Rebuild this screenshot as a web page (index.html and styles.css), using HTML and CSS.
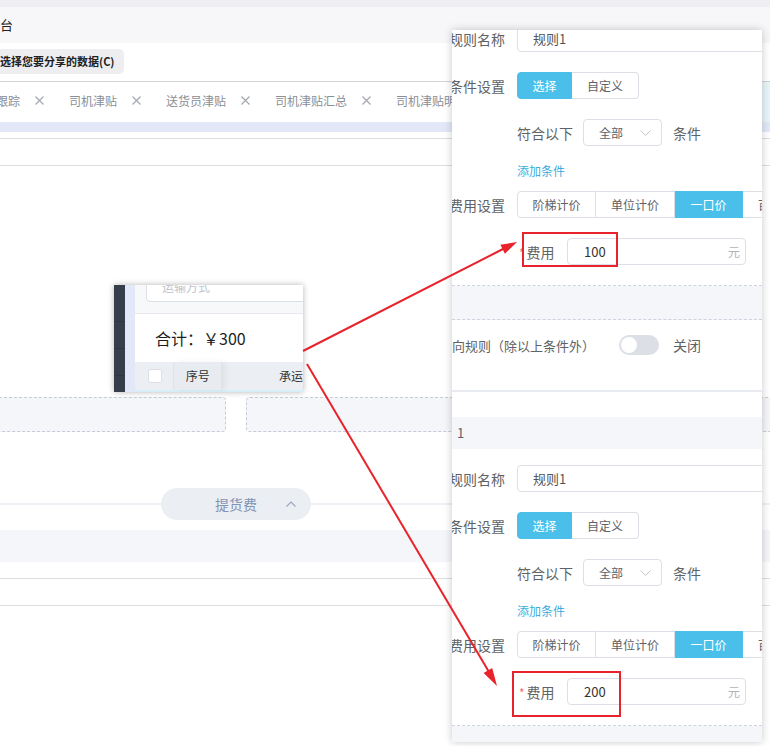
FILE: index.html
```html
<!DOCTYPE html>
<html lang="zh-CN">
<head>
  <meta charset="UTF-8">
  <meta name="viewport" content="width=device-width, initial-scale=1.0">
  <title>运费规则设置</title>
  <link rel="stylesheet" href="styles.css">
</head>
<body>
<div class="page">

  <!-- 背景页面 -->
  <div class="top-strip"></div>
  <div class="title-bar">台</div>
  <div class="share-bar"><span class="share-btn">选择您要分享的数据(C)</span></div>

  <div class="tabs">
    <div class="tab"><span>跟踪</span><svg class="x" viewBox="0 0 9 9"><path d="M0.5 0.5L8.5 8.5M8.5 0.5L0.5 8.5"/></svg></div>
    <div class="tab"><span>司机津贴</span><svg class="x" viewBox="0 0 9 9"><path d="M0.5 0.5L8.5 8.5M8.5 0.5L0.5 8.5"/></svg></div>
    <div class="tab"><span>送货员津贴</span><svg class="x" viewBox="0 0 9 9"><path d="M0.5 0.5L8.5 8.5M8.5 0.5L0.5 8.5"/></svg></div>
    <div class="tab"><span>司机津贴汇总</span><svg class="x" viewBox="0 0 9 9"><path d="M0.5 0.5L8.5 8.5M8.5 0.5L0.5 8.5"/></svg></div>
    <div class="tab"><span>司机津贴明细</span><svg class="x" viewBox="0 0 9 9"><path d="M0.5 0.5L8.5 8.5M8.5 0.5L0.5 8.5"/></svg></div>
    <div class="tab"><span>送货员津贴汇总</span><svg class="x" viewBox="0 0 9 9"><path d="M0.5 0.5L8.5 8.5M8.5 0.5L0.5 8.5"/></svg></div>
    <div class="tab active"><span>承运商运费规则</span><svg class="x" viewBox="0 0 9 9"><path d="M0.5 0.5L8.5 8.5M8.5 0.5L0.5 8.5"/></svg></div>
  </div>
  <div class="tabs-foot"></div>
  <div class="line-row short"></div>
  <div class="line-row"></div>
  <div class="blank"></div>

  <div class="drops">
    <div class="drop"></div>
    <div class="drop"></div>
  </div>

  <div class="fold">
    <span class="pill">提货费
      <svg class="up" viewBox="0 0 10 6"><path d="M0.5 5.5L5 1L9.5 5.5"/></svg>
    </span>
  </div>
  <div class="gray-band"></div>
  <div class="line-row mid"></div>
  <div class="line-row"></div>

  <!-- 截图：合计 -->
  <div class="snap">
    <div class="snap-nav"><i></i><i></i><i></i></div>
    <div class="snap-rail"></div>
    <div class="snap-main">
      <div class="snap-filter"><div class="snap-input">运输方式</div></div>
      <div class="snap-total">合计：￥300</div>
      <div class="snap-head">
        <span class="snap-check"><i></i></span>
        <span class="snap-no">序号</span>
        <span class="snap-carrier">承运</span>
      </div>
    </div>
  </div>

  <!-- 规则面板 -->
  <div class="rule-panel">
    <div class="rule-block first">
      <div class="form-item">
        <label>规则名称</label>
        <div class="text-input name-input">规则1</div>
      </div>
      <div class="form-item">
        <label>条件设置</label>
        <div class="btn-group">
          <span class="on w55">选择</span>
          <span class="w67">自定义</span>
        </div>
      </div>
      <div class="form-item indent match">
        <span class="txt">符合以下</span>
        <div class="select">全部<svg class="down" viewBox="0 0 11 6"><path d="M0.5 0.5L5.5 5.5L10.5 0.5"/></svg></div>
        <span class="txt">条件</span>
      </div>
      <div class="link-row"><a>添加条件</a></div>
      <div class="form-item">
        <label>费用设置</label>
        <div class="btn-group">
          <span class="w79">阶梯计价</span>
          <span class="w79">单位计价</span>
          <span class="on w68">一口价</span>
          <span class="w79">百分比价</span>
        </div>
      </div>
      <div class="form-item indent">
        <span class="fee-label"><em>*</em>费用</span>
        <div class="text-input fee-input">100<span class="unit">元</span></div>
      </div>
    </div>
    <div class="rule-gap"></div>
    <div class="else-row">
      <span class="else-text">向规则（除以上条件外）</span>
      <span class="switch"><i></i></span>
      <span class="else-state">关闭</span>
    </div>
    <div class="rule-head">1</div>
    <div class="rule-block">
      <div class="form-item">
        <label>规则名称</label>
        <div class="text-input name-input">规则1</div>
      </div>
      <div class="form-item">
        <label>条件设置</label>
        <div class="btn-group">
          <span class="on w55">选择</span>
          <span class="w67">自定义</span>
        </div>
      </div>
      <div class="form-item indent match">
        <span class="txt">符合以下</span>
        <div class="select">全部<svg class="down" viewBox="0 0 11 6"><path d="M0.5 0.5L5.5 5.5L10.5 0.5"/></svg></div>
        <span class="txt">条件</span>
      </div>
      <div class="link-row"><a>添加条件</a></div>
      <div class="form-item">
        <label>费用设置</label>
        <div class="btn-group">
          <span class="w79">阶梯计价</span>
          <span class="w79">单位计价</span>
          <span class="on w68">一口价</span>
          <span class="w79">百分比价</span>
        </div>
      </div>
      <div class="form-item indent">
        <span class="fee-label"><em>*</em>费用</span>
        <div class="text-input fee-input">200<span class="unit">元</span></div>
      </div>
    </div>
    <div class="rule-tail"></div>
  </div>

  <!-- 标注 -->
  <svg class="marks" viewBox="0 0 770 746">
    <line x1="303" y1="351" x2="504" y2="248.5"/>
    <polygon points="517,242 504.9,253.7 500.4,244.7"/>
    <line x1="307" y1="364" x2="489" y2="672"/>
    <polygon points="497,686 483.6,673 492.2,668"/>
    <rect x="523" y="233" width="94" height="33"/>
    <rect x="513" y="672" width="107" height="44"/>
  </svg>

</div>
</body>
</html>
```

FILE: styles.css
```css
* {
  box-sizing: border-box;
}

body {
  margin: 0;
  font-family: "Noto Sans CJK SC", "Noto Sans", sans-serif;
  color: #606266;
  background-color: #fff;
}

.page {
  position: relative;
  width: 770px;
  height: 746px;
  overflow: hidden;
}

/* 背景页面 */
.top-strip {
  height: 7px;
  background-color: #eeeef3;
}

.title-bar {
  height: 36px;
  line-height: 36px;
  background-color: #f7f7f9;
  font-size: 13px;
  color: #222;
}

.share-bar {
  height: 39px;
  padding-top: 4px;
  border-bottom: 1px solid #d2d3d8;
}

.share-btn {
  display: inline-block;
  height: 25px;
  line-height: 25px;
  padding-right: 9px;
  background-color: #eeeef1;
  border-radius: 0 5px 5px 0;
  font-size: 11px;
  font-weight: bold;
  color: #222;
}

.tabs {
  display: flex;
  align-items: center;
  height: 40px;
  margin-left: -4px;
  white-space: nowrap;
  font-size: 12px;
  line-height: 16px;
  color: #8a8e96;
}

.tab {
  display: flex;
  align-items: center;
  gap: 15px;
  margin-right: 25px;
  margin-top: -3px;
  flex-shrink: 0;
}

.tab .x {
  width: 9px;
  height: 9px;
  fill: none;
  stroke: #a3a7ae;
  stroke-width: 1.2;
}

.tab.active {
  height: 40px;
  padding: 0 12px;
  margin-left: -12px;
  margin-top: 0;
  background-color: #e7f5f9;
  color: #3aaecf;
}

.tabs-foot {
  height: 10px;
  background-color: #e3e8f8;
}

.line-row {
  height: 27px;
  border-bottom: 1px solid #dcdde3;
}

.line-row.short {
  height: 7px;
}

.line-row.mid {
  height: 17px;
}

.blank {
  height: 231px;
}

.drops {
  display: flex;
  gap: 20px;
  height: 35px;
  margin-left: -10px;
}

.drop {
  border: 1px dashed #c6cbd7;
  border-radius: 4px;
  background-color: #f5f6fa;
}

.drop:first-child {
  width: 236px;
}

.drop:last-child {
  flex: 1;
  margin-right: -20px;
}

.fold {
  height: 32px;
  margin-top: 56px;
  background: linear-gradient(#edf0f4, #edf0f4) 0 15px / 100% 2px no-repeat;
}

.pill {
  display: flex;
  align-items: center;
  width: 150px;
  height: 32px;
  margin-left: 161px;
  padding-left: 54px;
  border-radius: 16px;
  background-color: #ebeef3;
  color: #8492b4;
  font-size: 14px;
}

.pill .up {
  width: 10px;
  height: 6px;
  margin-left: 29px;
  fill: none;
  stroke: #9aa5bf;
  stroke-width: 1.1;
}

.gray-band {
  height: 32px;
  margin-top: 10px;
  background-color: #f5f6fa;
}

/* 截图：合计 */
.snap {
  position: absolute;
  left: 114px;
  top: 285px;
  width: 189px;
  height: 107px;
  display: flex;
  overflow: hidden;
  box-shadow: 0 0 6px rgba(0, 0, 0, 0.3);
  z-index: 2;
}

.snap-nav {
  width: 11px;
  background-color: #363e4b;
  padding-top: 10px;
}

.snap-nav i {
  display: block;
  height: 27px;
  border-bottom: 1px solid #2f3642;
}

.snap-rail {
  width: 10px;
  background-color: #e3e8f8;
}

.snap-main {
  flex: 1;
  background-color: #fff;
  overflow: hidden;
}

.snap-filter {
  display: flow-root;
  height: 29px;
  background-color: #f7f8fa;
  border-bottom: 1px solid #e6e8ed;
}

.snap-input {
  width: 175px;
  height: 30px;
  margin: -13px 0 0 11px;
  padding-left: 15px;
  line-height: 28px;
  border: 1px solid #dcdfe6;
  border-radius: 4px;
  background-color: #fff;
  font-size: 12px;
  color: #c0c4cc;
}

.snap-total {
  height: 48px;
  line-height: 48px;
  padding-left: 20px;
  font-size: 16px;
  color: #1f1f1f;
}

.snap-head {
  display: flex;
  height: 30px;
  background-color: #ebeef3;
  border-bottom: 2px solid #d5eef8;
  font-size: 12px;
  color: #333;
  line-height: 28px;
  white-space: nowrap;
}

.snap-check {
  width: 40px;
  padding: 7px 0 0 13px;
  border-right: 1px solid #dfe3ea;
}

.snap-check i {
  display: block;
  width: 14px;
  height: 14px;
  background-color: #fff;
  border: 1px solid #dcdfe6;
  border-radius: 2px;
}

.snap-no {
  width: 49px;
  padding-left: 12px;
  background-color: #e8ecf1;
  box-shadow: 4px 0 6px rgba(0, 0, 0, 0.06);
}

.snap-carrier {
  padding-left: 58px;
}

/* 规则面板 */
.rule-panel {
  position: absolute;
  left: 452px;
  top: 30px;
  width: 310px;
  height: 712px;
  background-color: #fff;
  box-shadow: 0 0 8px rgba(0, 0, 0, 0.22);
  overflow: hidden;
  z-index: 2;
}

.rule-block {
  padding-bottom: 20px;
  border-bottom: 1px dashed #cdd3de;
}

.rule-block.first {
  margin-top: -5px;
}

.form-item {
  display: flex;
  align-items: center;
  height: 27px;
  margin-bottom: 20px;
  white-space: nowrap;
}

.rule-block .form-item:last-child {
  margin-bottom: 0;
}

.form-item.match {
  margin-bottom: 15px;
}

.form-item label {
  width: 68px;
  margin-left: -3px;
  padding-right: 12px;
  flex-shrink: 0;
  text-align: right;
  font-size: 14px;
}

.form-item.indent {
  padding-left: 65px;
}

.txt {
  font-size: 14px;
}

.text-input {
  height: 27px;
  padding: 0 15px;
  border: 1px solid #dcdfe6;
  border-radius: 4px;
  font-size: 13px;
  line-height: 25px;
  color: #555;
}

.name-input {
  width: 280px;
  flex-shrink: 0;
}

.btn-group {
  display: flex;
  flex-shrink: 0;
}

.btn-group span {
  height: 27px;
  line-height: 25px;
  border: 1px solid #dcdfe6;
  font-size: 12px;
  text-align: center;
  flex-shrink: 0;
}

.btn-group span + span {
  border-left: none;
}

.btn-group span:first-child {
  border-radius: 4px 0 0 4px;
}

.btn-group span:last-child {
  border-radius: 0 4px 4px 0;
}

.btn-group .on {
  background-color: #49bfea;
  border-color: #49bfea;
  color: #fff;
}

.w55 { width: 55px; }
.w67 { width: 67px; }
.w68 { width: 68px; }
.w79 { width: 79px; }

.select {
  display: flex;
  align-items: center;
  width: 79px;
  height: 27px;
  margin: 0 11px 0 10px;
  padding-left: 15px;
  border: 1px solid #dcdfe6;
  border-radius: 4px;
  font-size: 12px;
}

.select .down {
  width: 11px;
  height: 6px;
  margin-left: 17px;
  fill: none;
  stroke: #c0c4cc;
  stroke-width: 1;
}

.link-row {
  height: 20px;
  line-height: 20px;
  margin-bottom: 10px;
  padding-left: 65px;
  font-size: 12px;
}

.link-row a {
  color: #3badde;
}

.fee-label {
  width: 50px;
  padding-left: 2px;
  font-size: 14px;
  flex-shrink: 0;
}

.fee-label em {
  font-style: normal;
  color: #f56c6c;
  font-size: 12px;
  margin-right: 2px;
}

.fee-input {
  display: flex;
  justify-content: space-between;
  width: 179px;
  padding-left: 16px;
  padding-right: 5px;
  font-size: 13px;
  color: #333;
}

.unit {
  font-size: 12px;
  color: #b0b3b8;
}

.rule-gap {
  height: 34px;
  background-color: #f5f6fa;
  border-bottom: 1px dashed #cdd3de;
}

.else-row {
  display: flex;
  align-items: center;
  height: 72px;
  padding-top: 15px;
  padding-bottom: 35px;
  border-bottom: 2px solid #e8ecf1;
  white-space: nowrap;
}

.else-text {
  width: 167px;
  font-size: 13px;
  flex-shrink: 0;
}

.switch {
  position: relative;
  width: 40px;
  height: 20px;
  border-radius: 10px;
  background-color: #dcdfe6;
  flex-shrink: 0;
}

.switch i {
  position: absolute;
  left: 2px;
  top: 2px;
  width: 16px;
  height: 16px;
  border-radius: 50%;
  background-color: #fff;
}

.else-state {
  margin-left: 14px;
  font-size: 14px;
}

.rule-head {
  height: 32px;
  margin-top: 25px;
  margin-bottom: 16px;
  padding-left: 5px;
  line-height: 32px;
  background-color: #f5f6fa;
  font-size: 13px;
}

.rule-tail {
  height: 40px;
  background-color: #f5f6fa;
}

/* 标注 */
.marks {
  position: absolute;
  left: 0;
  top: 0;
  width: 770px;
  height: 746px;
  z-index: 3;
  pointer-events: none;
}

.marks line,
.marks rect {
  fill: none;
  stroke: #e8232b;
  stroke-width: 2;
}

.marks polygon {
  fill: #e8232b;
}
```
